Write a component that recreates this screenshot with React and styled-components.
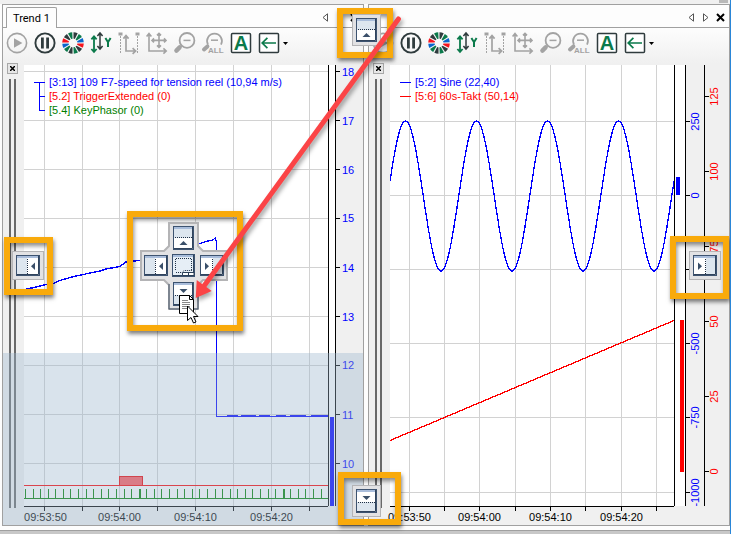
import React, { useState } from "react";
import styled, { createGlobalStyle } from "styled-components";

const FIRST_TICKS = ["09:53:50", "09:54:00", "09:54:10", "09:54:20"];

const trendOne = {
  width: 304,
  gridX: [20, 58, 95, 133, 171, 209, 247, 285],
  gridY: [6, 55, 104, 153, 202, 251, 300, 349, 398],
  labelX: [21, 95, 171, 247],
};

const trendTwo = {
  width: 284,
  gridX: [19, 54, 89, 125, 160, 195, 231, 266],
  gridY: [56, 130, 204, 278, 352, 427],
  labelX: [19, 89, 160, 231],
};

const PLOT_HEIGHT = 441;

const speedAxis = [18, 17, 16, 15, 14, 13, 12, 11, 10].map((value, i) => ({
  value,
  at: 6 + i * 49,
}));

const sineAxis = [
  { value: "250", at: 56 },
  { value: "0", at: 130 },
  { value: "-250", at: 204 },
  { value: "-500", at: 278 },
  { value: "-750", at: 352 },
  { value: "-1000", at: 427 },
];

const taktAxis = [
  { value: "125", at: 31 },
  { value: "100", at: 106 },
  { value: "75", at: 181 },
  { value: "50", at: 256 },
  { value: "25", at: 331 },
  { value: "0", at: 406 },
];

const pct = (value, total) => `${((value + 0.5) / total) * 100}%`;

const sinePoints = () => {
  const points = [];
  for (let x = 0; x <= 284; x += 1) {
    const y = 131 - 75 * Math.cos(((x - 15.5) / 71) * 2 * Math.PI);
    points.push(`${x},${y.toFixed(1)}`);
  }
  return points.join(" ");
};

const pulses = Array.from({ length: 40 }, (_, i) => ({
  x: Math.round(1 + i * 7.58),
  wide: i === 15 || i === 34,
}));

/* ---------- toolbar icons ---------- */

const GREY = "#a3a3a3";
const DARK = "#2f3b3d";
const GREEN = "#0b7a4b";
const BLUE = "#0a66cc";
const RED = "#f5141e";

const PlayIcon = () => (
  <svg width="24" height="24" viewBox="0 0 24 24">
    <circle cx="12" cy="12" r="9.6" fill="none" stroke={GREY} strokeWidth="1.6" />
    <path d="M9 7.2 L17.4 12 L9 16.8Z" fill={GREY} />
  </svg>
);

const PauseIcon = () => (
  <svg width="24" height="24" viewBox="0 0 24 24">
    <circle cx="12" cy="12" r="9.6" fill="none" stroke={DARK} strokeWidth="1.9" />
    <path d="M8 6.5h2.8v11H8z M13.2 6.5H16v11h-2.8z" fill={DARK} />
  </svg>
);

const WHEEL = [
  DARK, GREEN, BLUE, RED, DARK, GREEN,
  DARK, GREEN, BLUE, RED, DARK, GREEN,
];

const WheelIcon = () => (
  <svg width="24" height="24" viewBox="0 0 24 24">
    {WHEEL.map((color, i) => (
      <path
        key={i}
        d="M12.5 1.2 A10.8 10.8 0 0 1 16.7 2.3 L13.8 8 L12.5 7.6Z"
        fill={color}
        transform={`rotate(${i * 30} 12 12)`}
      />
    ))}
  </svg>
);

const ScaleYIcon = () => (
  <svg width="24" height="24" viewBox="0 0 24 24" fill="none" strokeWidth="1.5">
    <path d="M5 6v14 M2.4 8.4 5 5.4l2.6 3 M2.4 18 5 21l2.6-3" stroke={GREEN} strokeWidth="1.8" />
    <path d="M11 3v14 M8.4 5 11 2l2.6 3 M8.4 15 11 18l2.6-3" stroke={DARK} />
    <path d="M16.4 7 19 11.2 21.6 7 M19 11v5" stroke={GREEN} strokeWidth="2" />
  </svg>
);

const RangeIcon = () => (
  <svg width="24" height="24" viewBox="0 0 24 24" fill="none" stroke={GREY}>
    <path d="M1.5 1.5h4v3h-4z M18.5 1.5h4v3h-4z" fill={GREY} stroke="none" />
    <path d="M3.5 5v18 M20.5 5v18" strokeDasharray="2 1" />
    <path d="M9 5v15h9 M6.4 7.6 9 4.6l2.6 3 M15.6 17.2l3 2.8-3 2.8" strokeWidth="1.7" />
  </svg>
);

const PanIcon = () => (
  <svg width="24" height="24" viewBox="0 0 24 24" fill="none" stroke={GREY} strokeWidth="1.6">
    <path d="M4 3v17h17 M1.6 5.4 4 2.6l2.4 2.8 M18.4 17.4l2.8 2.6-2.8 2.6" />
    <path d="M14 2.4v14 M7 9.4h14 M12 4.4l2-2 2 2 M12 14.4l2 2 2-2 M9 7.4l-2 2 2 2 M19 7.4l2 2-2 2" />
  </svg>
);

const ZoomOutIcon = () => (
  <svg width="24" height="24" viewBox="0 0 24 24" fill="none" stroke={GREY}>
    <circle cx="14" cy="9.4" r="7.4" strokeWidth="1.8" />
    <path d="M10.5 9.4h7" strokeWidth="1.5" />
    <path d="M8.6 14.6 7 16.2" strokeWidth="1.6" />
    <path d="M6.6 16.4 3.4 19.6" strokeWidth="4.4" strokeLinecap="round" />
  </svg>
);

const ZoomAllIcon = () => (
  <svg width="24" height="24" viewBox="0 0 24 24" fill="none" stroke={GREY}>
    <path d="M7 13.6a7.4 7.4 0 1 1 13 0" strokeWidth="1.7" />
    <path d="M10 9.2h7" strokeWidth="1.5" />
    <path d="M6.4 15.4 3 18.4" strokeWidth="4" strokeLinecap="round" />
    <text
      x="7"
      y="22"
      fill={GREY}
      stroke="none"
      fontFamily="'Liberation Sans', Arial, sans-serif"
      fontWeight="700"
      fontSize="8"
    >
      ALL
    </text>
  </svg>
);

const AutoIcon = () => (
  <svg width="24" height="24" viewBox="0 0 24 24" fill="none">
    <rect x="2.5" y="2.5" width="19" height="19" rx="1" fill="#fff" stroke={DARK} strokeWidth="1.5" />
    <text
      x="12"
      y="19"
      textAnchor="middle"
      fill={GREEN}
      fontFamily="'Liberation Sans', Arial, sans-serif"
      fontWeight="700"
      fontSize="20"
    >
      A
    </text>
  </svg>
);

const BackIcon = () => (
  <svg width="24" height="24" viewBox="0 0 24 24" fill="none">
    <rect x="2.5" y="2.5" width="19" height="19" rx="1" fill="#fff" stroke={DARK} strokeWidth="1.5" />
    <path d="M19 12H5.4 M10.4 6.8 5.2 12l5.2 5.2" stroke={GREEN} strokeWidth="1.7" />
  </svg>
);

const tools = [
  { label: "Play", Icon: PlayIcon },
  { label: "Pause", Icon: PauseIcon },
  { label: "Colors", Icon: WheelIcon },
  { label: "Autoscale Y", Icon: ScaleYIcon },
  { label: "Restore range", Icon: RangeIcon },
  { label: "Restore axes", Icon: PanIcon },
  { label: "Zoom out", Icon: ZoomOutIcon },
  { label: "Zoom out all", Icon: ZoomAllIcon },
  { label: "Auto", Icon: AutoIcon },
  { label: "Back", Icon: BackIcon },
];

/* ---------- docking guides ---------- */

// window thumbnail: the shaded half shows where the pane will dock
const Thumb = ({ side, x = 0, y = 0 }) => {
  const upright = side === "top" || side === "bottom";
  const w = upright ? 21 : 24;
  const h = upright ? 24 : 21;
  const shade = {
    top: "M1 3h18v9H1z",
    bottom: "M1 13h18v9H1z",
    left: "M1 3h10v16H1z",
    right: "M13 3h9v16h-9z",
  }[side];
  const dots = {
    top: "M2 11.5h17",
    bottom: "M2 13.5h17",
    left: "M11.5 4v15",
    right: "M12.5 4v15",
  }[side];
  const arrow = {
    top: "M6.5 19h8l-4-4z",
    bottom: "M6.5 7h8l-4 4z",
    left: "M19 7.5v7.5l-4-3.7z",
    right: "M5 7.5v7.5l4-3.7z",
  }[side];
  return (
    <svg x={x} y={y} width={w} height={h} viewBox={`0 0 ${w} ${h}`}>
      <rect x=".5" y=".5" width={w - 1} height={h - 1} fill="#fff" stroke="#3d5370" />
      <path d={shade} fill="#dde6ef" />
      <path d={`M1 2h${w - 2}`} stroke="#a9bddb" strokeWidth="2" />
      <path d={`M${w - 1.5} 1V${h - 1.5}H1`} fill="none" stroke="#31445d" />
      <path d={dots} stroke="#1f2f45" strokeDasharray="1 1" />
      <path d={arrow} fill="#3a4f69" />
    </svg>
  );
};

const CrossGuide = () => (
  <svg width="88" height="88" viewBox="0 0 88 88" overflow="visible">
    <path
      d="M29 1H58V24L63 29H87V58H63L58 63V87H29V63L24 58H1V29H24L29 24Z"
      fill="#e2e2e4"
      stroke="#b4b4b6"
      strokeWidth="2"
    />
    <path d="M29 62V87H58V62" fill="none" stroke="#46566b" />
    <Thumb side="top" x={33} y={4} />
    <Thumb side="left" x={4} y={33} />
    <Thumb side="right" x={60} y={33} />
    <Thumb side="bottom" x={33} y={60} />
    <g transform="translate(32 32)">
      <rect x=".5" y=".5" width="22" height="22" fill="#e6eef6" stroke="#3d5370" />
      <path d="M1 2h21" stroke="#a9bddb" strokeWidth="2" />
      <path d="M21.5 1V21.5H1" fill="none" stroke="#31445d" />
      <path d="M3.5 16V4.5h16V16 M4 18.5h6l2-2h8" fill="none" stroke="#1f2f45" strokeDasharray="1 1" />
      <path d="M10.5 18.5H22V21.5H10.5Z M16.5 18.5v3" fill="#fff" stroke="#2b3f57" />
    </g>
    <g transform="translate(39 73)">
      <path d="M.5 .5H10.5L14.5 4.5V18.5H.5Z" fill="#fff" stroke="#000" />
      <path d="M10.5 .5V4.5H14.5" fill="none" stroke="#000" />
      <path d="M3 5.5h6 M3 7.5h8 M3 9.5h8 M3 11.5h8 M3 13.5h6" stroke="#888" />
      <path d="M8.5 11V25.5L12 22.5L14.5 28L17 27L14.5 21.5H19Z" fill="#fff" stroke="#000" />
    </g>
  </svg>
);

const GlobalStyle = createGlobalStyle`
  * {
    box-sizing: border-box;
  }

  body {
    margin: 0;
    background: #fdfdfd;
    font-family: "Liberation Sans", Arial, sans-serif;
    font-size: 11px;
    color: #000;
  }

  svg {
    display: block;
  }
`;

const DockGuide = ({ side }) => (
  <GuideButton aria-label={`Dock ${side}`} $upright={side === "top" || side === "bottom"}>
    <Thumb side={side} />
  </GuideButton>
);

const Tools = () => (
  <Toolbar>
    {tools.map(({ label, Icon }) => (
      <ToolButton key={label} aria-label={label}>
        <Icon />
      </ToolButton>
    ))}
    <DropButton aria-label="More">
      <svg width="5" height="3" viewBox="0 0 5 3">
        <path d="M0 0h5L2.5 3z" />
      </svg>
    </DropButton>
  </Toolbar>
);

const HeaderButtons = () => (
  <HeaderActions>
    <HeaderButton aria-label="Previous">
      <svg width="7" height="9" viewBox="0 0 7 9">
        <path d="M5.5 .8v7.4L1 4.5z" fill="#fff" stroke="#555" />
      </svg>
    </HeaderButton>
    <HeaderButton aria-label="Next">
      <svg width="7" height="9" viewBox="0 0 7 9">
        <path d="M1.5 .8v7.4L6 4.5z" fill="#fff" stroke="#555" />
      </svg>
    </HeaderButton>
    <HeaderButton aria-label="Close">
      <svg width="9" height="9" viewBox="0 0 9 9">
        <path d="M1 1l7 7M8 1L1 8" stroke="#000" strokeWidth="2" />
      </svg>
    </HeaderButton>
  </HeaderActions>
);

const Gutter = () => (
  <GutterColumn>
    <CloseStrip aria-label="Close strip">
      <svg width="5" height="5" viewBox="0 0 5 5">
        <path d="M0 0l5 5M5 0L0 5" stroke="#000" strokeWidth="1.5" />
      </svg>
    </CloseStrip>
    <Grip />
  </GutterColumn>
);

const Plot = ({ data, children }) => (
  <PlotSvg>
    {data.gridX.map((x) => (
      <line
        key={`x${x}`}
        x1={pct(x, data.width)}
        x2={pct(x, data.width)}
        y1="0"
        y2="100%"
        stroke="#d2d2d2"
        shapeRendering="crispEdges"
      />
    ))}
    {data.gridY.map((y) => (
      <line
        key={`y${y}`}
        x1="0"
        x2="100%"
        y1={pct(y, PLOT_HEIGHT)}
        y2={pct(y, PLOT_HEIGHT)}
        stroke="#d2d2d2"
        shapeRendering="crispEdges"
      />
    ))}
    <svg
      width="100%"
      height="100%"
      viewBox={`0 0 ${data.width} ${PLOT_HEIGHT}`}
      preserveAspectRatio="none"
      fill="none"
    >
      {children}
    </svg>
  </PlotSvg>
);

const Scale = ({ width, bars }) => (
  <ScaleStrip $width={width}>
    <svg
      width="100%"
      height="100%"
      viewBox={`0 0 ${width - 1} ${PLOT_HEIGHT}`}
      preserveAspectRatio="none"
      shapeRendering="crispEdges"
    >
      {bars.map((bar) => (
        <rect key={bar.color} x={bar.x} y={bar.y} width="4" height={bar.height} fill={bar.color} />
      ))}
    </svg>
  </ScaleStrip>
);

const ValueAxis = ({ ticks, color, width, vertical }) => (
  <AxisColumn $width={width}>
    {ticks.map((tick) => (
      <svg key={tick.value} y={pct(tick.at, PLOT_HEIGHT)} overflow="visible">
        <line x1="0" x2="4" y1="0" y2="0" stroke="#000" shapeRendering="crispEdges" />
        {vertical ? (
          <text transform="translate(13 0) rotate(-90)" textAnchor="middle" fill={color}>
            {tick.value}
          </text>
        ) : (
          <text x="6" y="4" fill={color}>
            {tick.value}
          </text>
        )}
      </svg>
    ))}
  </AxisColumn>
);

const TimeAxis = ({ data }) => (
  <TimeRow>
    {data.gridX.map((x) => (
      <line
        key={x}
        x1={pct(x, data.width)}
        x2={pct(x, data.width)}
        y1="0"
        y2="4"
        stroke="#000"
        shapeRendering="crispEdges"
      />
    ))}
    {FIRST_TICKS.map((label, i) => (
      <text key={label} x={pct(data.labelX[i], data.width)} y="14" textAnchor="middle">
        {label}
      </text>
    ))}
  </TimeRow>
);

const App = () => {
  const [tab, setTab] = useState("trend1");

  return (
    <>
      <GlobalStyle />
      <Workspace>
        <TopStrip>
          <TopHandle />
        </TopStrip>
        <Panels>
          <Panel>
            <PanelHeader>
              <Tab $active={tab === "trend1"} onClick={() => setTab("trend1")}>
                Trend 1
              </Tab>
              <HeaderButtons />
            </PanelHeader>
            <Tools />
            <PanelBody>
              <Gutter />
              <ChartColumn>
                <PlotArea>
                  <Plot data={trendOne}>
                    <rect x="95.5" y="411.5" width="23" height="9" fill="#ff595c" stroke="#f00000" />
                    <path d="M0 420.5H304" stroke="#ff0000" />
                    <path d="M0 433.5H304" stroke="#008000" />
                    {pulses.map((p) => (
                      <path
                        key={p.x}
                        d={`M${p.x + 0.5} 424V433`}
                        stroke="#008000"
                        strokeWidth={p.wide ? 2 : 1}
                        shapeRendering="crispEdges"
                      />
                    ))}
                    <polyline
                      points="2,223.5 8,223 14,221.5 22,219.5 29,218.5 36,215.5 48,212 57,210 66,208 76,206 82,204 96,201.5 102,197 110,196 118,195 128,191 146,185 160,182 174,179 184,176 189,175 191,173 192,176"
                      stroke="#0000ff"
                      strokeWidth="1.4"
                      shapeRendering="crispEdges"
                    />
                    <path
                      d="M192.5 175V351.5H304"
                      stroke="#0000ff"
                      shapeRendering="crispEdges"
                    />
                    <path
                      d="M203 350.5H214 M217 350.5H232 M235 350.5H246 M252 350.5H262 M266 350.5H282 M287 350.5H304"
                      stroke="#0000ff"
                      shapeRendering="crispEdges"
                    />
                  </Plot>
                  <Legend>
                    <LegendItem $color="#0000ff">
                      <LegendMark viewBox="0 0 12 14">
                        <path d="M0 7.5h11M5.5 7.5V14" stroke="#0000ff" />
                      </LegendMark>
                      [3:13] 109 F7-speed for tension reel (10,94 m/s)
                    </LegendItem>
                    <LegendItem $color="#ff0000">
                      <LegendMark viewBox="0 0 12 14">
                        <path d="M5.5 0V14M5.5 7.5h5.5" stroke="#0000ff" />
                      </LegendMark>
                      [5.2] TriggerExtended (0)
                    </LegendItem>
                    <LegendItem $color="#008000">
                      <LegendMark viewBox="0 0 12 14">
                        <path d="M5.5 0V7.5h5.5" stroke="#0000ff" fill="none" />
                      </LegendMark>
                      [5.4] KeyPhasor (0)
                    </LegendItem>
                  </Legend>
                </PlotArea>
                <TimeAxis data={trendOne} />
              </ChartColumn>
              <Scale width={7} bars={[{ x: 1, y: 352, height: 89, color: "#0000ff" }]} />
              <ValueAxis ticks={speedAxis} color="#0000ff" width={28} />
            </PanelBody>
            <DropPreview />
            <CenterGuide>
              <Frame $pad="5px 9px 15px 7px">
                <CrossGuide />
              </Frame>
            </CenterGuide>
          </Panel>

          <Panel>
            <PanelHeader>
              <HeaderButtons />
            </PanelHeader>
            <Tools />
            <PanelBody>
              <Gutter />
              <ChartColumn>
                <PlotArea>
                  <Plot data={trendTwo}>
                    <polyline
                      points={sinePoints()}
                      stroke="#0000ff"
                      strokeWidth="1.3"
                      shapeRendering="crispEdges"
                    />
                    <path
                      d="M0 375.5L284 255.5"
                      stroke="#ff0000"
                      strokeWidth="1.3"
                      shapeRendering="crispEdges"
                    />
                  </Plot>
                  <Legend>
                    <LegendItem $color="#0000ff">
                      <LegendMark viewBox="0 0 12 14">
                        <path d="M0 7.5h11" stroke="#0000ff" />
                      </LegendMark>
                      [5:2] Sine (22,40)
                    </LegendItem>
                    <LegendItem $color="#ff0000">
                      <LegendMark viewBox="0 0 12 14">
                        <path d="M0 7.5h11" stroke="#ff0000" />
                      </LegendMark>
                      [5:6] 60s-Takt (50,14)
                    </LegendItem>
                  </Legend>
                </PlotArea>
                <TimeAxis data={trendTwo} />
              </ChartColumn>
              <Scale
                width={11}
                bars={[
                  { x: 1, y: 112, height: 18, color: "#0000ff" },
                  { x: 5, y: 255, height: 152, color: "#ff0000" },
                ]}
              />
              <ValueAxis ticks={sineAxis} color="#0000ff" width={19} vertical />
              <ValueAxis ticks={taktAxis} color="#ff0000" width={25} vertical />
            </PanelBody>
          </Panel>
        </Panels>
        <BottomStrip />

        <EdgeGuide $place="top">
          <Frame $pad="0 6px 6px 9px">
            <DockGuide side="top" />
          </Frame>
        </EdgeGuide>
        <EdgeGuide $place="bottom">
          <Frame $pad="7px 14px 2px 8px">
            <DockGuide side="bottom" />
          </Frame>
        </EdgeGuide>
        <EdgeGuide $place="left">
          <Frame $pad="8px 3px 9px 2px">
            <DockGuide side="left" />
          </Frame>
        </EdgeGuide>
        <EdgeGuide $place="right">
          <Frame $pad="9px 2px 13px 13px">
            <DockGuide side="right" />
          </Frame>
        </EdgeGuide>

        <ArrowLayer viewBox="0 0 731 534" preserveAspectRatio="none">
          <path d="M399 19L205 285" stroke="#fb4446" strokeWidth="5" strokeLinecap="round" />
          <path d="M196 298L197 280L212 291Z" fill="#fb4446" />
        </ArrowLayer>
      </Workspace>
    </>
  );
};

export default App;

const Workspace = styled.div`
  position: relative;
  display: flex;
  flex-direction: column;
  min-height: 100vh;
  overflow: hidden;
  border-right: 1px solid #2a86d8;
`;

const TopStrip = styled.div`
  display: flex;
  justify-content: flex-end;
  height: 4px;
  padding-right: 2px;
  background: #f0f0f0;
`;

const TopHandle = styled.div`
  width: 9px;
  height: 3px;
  background: #b8b8b8;
`;

const BottomStrip = styled.div`
  height: 8px;
  border-top: 4px solid #fdfdfd;
  background: #c8c8c8;
  box-shadow: inset 0 1px 0 #a0a0a0;
`;

const Panels = styled.div`
  flex: 1;
  display: grid;
  grid-template-columns: 1fr 1fr;
  gap: 4px;
  padding-left: 2px;
`;

const Panel = styled.section`
  position: relative;
  display: flex;
  flex-direction: column;
  min-width: 0;
  border: 1px solid #a0a0a0;
  background: #f0f0f0;
`;

const PanelHeader = styled.header`
  display: flex;
  align-items: flex-end;
  height: 23px;
  padding-left: 3px;
  background: #fdfdfd;
  box-shadow: inset 0 -1px 0 #a0a0a0;
`;

const Tab = styled.button`
  height: 21px;
  padding: 0 6px;
  border: 1px solid #a0a0a0;
  border-bottom: 0;
  border-radius: 2px 2px 0 0;
  background: ${(props) => (props.$active ? "#fdfdfd" : "#f0f0f0")};
  font-family: Roboto, "Liberation Sans", sans-serif;
  font-size: 11px;
`;

const HeaderActions = styled.div`
  display: flex;
  align-items: center;
  gap: 7px;
  height: 23px;
  margin-left: auto;
  padding: 1px 4px 0 0;
`;

const HeaderButton = styled.button`
  padding: 0;
  border: 0;
  background: none;
`;

const Toolbar = styled.div`
  display: flex;
  align-items: flex-start;
  height: 35px;
  background: linear-gradient(#fdfdfd, #f0f0f0);
`;

const ToolButton = styled.button`
  display: flex;
  align-items: center;
  justify-content: center;
  width: 28px;
  height: 30px;
  padding: 0;
  border: 0;
  background: none;
`;

const DropButton = styled(ToolButton)`
  width: 5px;
`;

const PanelBody = styled.div`
  flex: 1;
  display: flex;
`;

const GutterColumn = styled.div`
  display: flex;
  flex-direction: column;
  gap: 5px;
  width: 21px;
  padding: 0 6px 17px 4px;
`;

const CloseStrip = styled.button`
  display: flex;
  align-items: center;
  justify-content: center;
  width: 11px;
  height: 11px;
  padding: 0;
  border: 1px solid #a8a8a8;
  background: #e6e6e6;
`;

const Grip = styled.div`
  flex: 1;
  width: 7px;
  margin-left: 2px;
  border: solid #696969;
  border-width: 0 2px;
`;

const ChartColumn = styled.div`
  flex: 1;
  display: flex;
  flex-direction: column;
  min-width: 0;
  padding-top: 2px;
`;

const PlotArea = styled.div`
  flex: 1;
  display: grid;
  background: #fff;

  > * {
    grid-area: 1 / 1;
  }
`;

const PlotSvg = styled.svg`
  width: 100%;
  height: 100%;
`;

const Legend = styled.ul`
  z-index: 1;
  margin: 0;
  padding: 10px 0 0 10px;
  list-style: none;
`;

const LegendItem = styled.li`
  display: flex;
  height: 14px;
  line-height: 14px;
  white-space: nowrap;
  color: ${(props) => props.$color};
`;

const LegendMark = styled.svg`
  width: 12px;
  height: 14px;
  margin-right: 3px;
  shape-rendering: crispEdges;
`;

const TimeRow = styled.svg`
  width: 100%;
  height: 19px;
  overflow: visible;
  border-top: 1px solid #000;
`;

const ScaleStrip = styled.div`
  width: ${(props) => props.$width}px;
  margin: 2px 0 19px;
  border-left: 1px solid #000;
  background: #fff;

  svg {
    height: 100%;
  }
`;

const AxisColumn = styled.svg`
  width: ${(props) => props.$width}px;
  height: auto;
  margin: 2px 0 19px;
  overflow: visible;
  border-left: 1px solid #000;
`;

const DropPreview = styled.div`
  position: absolute;
  right: 0;
  bottom: 0;
  left: 0;
  height: 33%;
  background: rgba(156, 182, 206, 0.38);
`;

const CenterGuide = styled.div`
  position: absolute;
  top: 206px;
  right: 0;
  left: 4px;
  display: flex;
  justify-content: center;
`;

const Frame = styled.div`
  padding: ${(props) => props.$pad};
  border: 6px solid #f9aa0b;
  box-shadow: 1px 3px 4px rgba(0, 0, 0, 0.5), inset 1px 3px 4px rgba(0, 0, 0, 0.45);
`;

const places = {
  top: "top: 8px; left: 0; right: 0; justify-content: center;",
  bottom: "bottom: 9px; left: 8px; right: 0; justify-content: center;",
  left: "top: 0; bottom: 2px; left: 4px; align-items: center;",
  right: "top: 1px; bottom: 0; right: 1px; align-items: center;",
};

const EdgeGuide = styled.div`
  position: absolute;
  display: flex;
  pointer-events: none;
  ${(props) => places[props.$place]}
`;

const GuideButton = styled.button`
  display: flex;
  align-items: center;
  justify-content: center;
  width: ${(props) => (props.$upright ? 29 : 32)}px;
  height: ${(props) => (props.$upright ? 32 : 29)}px;
  padding: 0;
  border: 1px solid #b4b4b6;
  background: #e2e2e4;
  pointer-events: auto;
`;

const ArrowLayer = styled.svg`
  position: absolute;
  inset: 0;
  width: 100%;
  height: 100%;
  pointer-events: none;
  filter: drop-shadow(2px 3px 2px rgba(0, 0, 0, 0.35));
`;
